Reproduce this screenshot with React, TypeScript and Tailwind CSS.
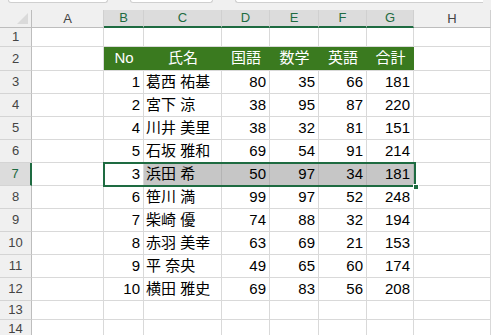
import React from 'react';

const cols = ['A', 'B', 'C', 'D', 'E', 'F', 'G', 'H'];
const widths = ['w-[72px]', 'w-[40px]', 'w-[78px]', 'w-[48px]', 'w-[49px]', 'w-[48px]', 'w-[47px]', 'flex-1'];

const rows: [number, string, number, number, number, number][] = [
  [1, '葛西 祐基', 80, 35, 66, 181],
  [2, '宮下 涼', 38, 95, 87, 220],
  [4, '川井 美里', 38, 32, 81, 151],
  [5, '石坂 雅和', 69, 54, 91, 214],
  [3, '浜田 希', 50, 97, 34, 181],
  [6, '笹川 満', 99, 97, 52, 248],
  [7, '柴崎 優', 74, 88, 32, 194],
  [8, '赤羽 美幸', 63, 69, 21, 153],
  [9, '平 奈央', 49, 65, 60, 174],
  [10, '横田 雅史', 69, 83, 56, 208],
];

const font = "font-['Liberation_Sans','Noto_Sans_CJK_JP',sans-serif]";

function RowHead({ n, h, active }: { n: number; h: string; active?: boolean }) {
  return (
    <div
      className={`w-[32px] ${h} shrink-0 flex items-center justify-center text-[13px] border-b border-[#d4d4d4] ${
        active ? 'bg-[#dcdcdc] text-[#1e6b41] border-r-2 border-r-[#1e6b41]' : 'bg-[#f0f0f0] text-[#444] border-r border-r-[#bdbdbd]'
      }`}
    >
      {n}
    </div>
  );
}

function Cell({ w, children, className = '' }: { w: string; children?: React.ReactNode; className?: string }) {
  return (
    <div className={`${w} shrink-0 h-full flex items-center border-r border-b border-[#d9d9d9] overflow-hidden whitespace-nowrap ${className}`}>
      {children}
    </div>
  );
}

export default function App() {
  return (
    <div className={`w-[491px] h-[335px] overflow-hidden bg-white text-[15px] text-black ${font}`}>
      {/* toolbar remnants */}
      <div className="h-[10px] bg-[#f0f0f0] flex gap-[22px] px-[8px]">
        <div className="w-[100px] h-[3px] bg-white border border-t-0 border-[#cfcfcf] rounded-b-[4px]" />
        <div className="w-[83px] h-[3px] bg-white border border-t-0 border-[#cfcfcf] rounded-b-[4px]" />
        <div className="flex-1 h-[3px] bg-white border border-t-0 border-r-0 border-[#cfcfcf] rounded-bl-[4px]" />
      </div>

      {/* column headers */}
      <div className="h-[18px] flex bg-[#f0f0f0] text-[13px]">
        <div className="w-[32px] shrink-0 relative border-r border-b border-[#bdbdbd]">
          <div className="absolute right-[3px] bottom-[3px] w-0 h-0 border-l-[11px] border-l-transparent border-b-[11px] border-b-[#dadada]" />
        </div>
        {cols.map((c, i) => {
          const sel = i >= 1 && i <= 6;
          return (
            <div
              key={c}
              className={`${widths[i]} shrink-0 flex items-center justify-center border-r border-[#d0d0d0] ${
                sel ? 'bg-[#dcdcdc] text-[#1e6b41] border-b-2 border-b-[#1e6b41]' : 'text-[#444] border-b border-b-[#bdbdbd]'
              }`}
            >
              {c}
            </div>
          );
        })}
      </div>

      <div className="relative">
        {/* row 1 */}
        <div className="flex h-[19px]">
          <RowHead n={1} h="h-[19px]" />
          {widths.map((w, i) => (
            <Cell key={i} w={w} />
          ))}
        </div>

        {/* row 2: table header */}
        <div className="flex h-[24px]">
          <RowHead n={2} h="h-[24px]" />
          <Cell w={widths[0]} />
          <div className="w-[310px] shrink-0 h-full flex bg-[#3a7a1f] text-white border-b border-[#d9d9d9]">
            {['No', '氏名', '国語', '数学', '英語', '合計'].map((t, i) => (
              <div key={t} className={`${widths[i + 1]} shrink-0 flex items-center justify-center`}>
                {t}
              </div>
            ))}
          </div>
          <Cell w={widths[7]} />
        </div>

        {/* data rows */}
        {rows.map((r, ri) => {
          const active = ri === 4;
          const fill = active ? 'bg-[#c6c6c6] border-r-[#b4b4b4]' : '';
          return (
            <div key={ri} className="flex h-[23px]">
              <RowHead n={ri + 3} h="h-[23px]" active={active} />
              <Cell w={widths[0]} />
              <Cell w={widths[1]} className="justify-end pr-[3px]">{r[0]}</Cell>
              <Cell w={widths[2]} className={`pl-[2px] ${fill}`}>{r[1]}</Cell>
              {[r[2], r[3], r[4], r[5]].map((v, k) => (
                <Cell key={k} w={widths[k + 3]} className={`justify-end pr-[3px] ${fill}`}>
                  {v}
                </Cell>
              ))}
              <Cell w={widths[7]} />
            </div>
          );
        })}

        {/* rows 13, 14 */}
        {[13, 14].map((n) => (
          <div key={n} className="flex h-[19px]">
            <RowHead n={n} h="h-[19px]" />
            {widths.map((w, i) => (
              <Cell key={i} w={w} />
            ))}
          </div>
        ))}

        {/* selection outline B7:G7 */}
        <div className="absolute left-[103px] top-[134px] w-[313px] h-[25px] border-2 border-[#1e6b41] pointer-events-none">
          <div className="absolute right-[-5px] bottom-[-5px] w-[6px] h-[6px] bg-[#1e6b41] border border-white" />
        </div>
      </div>
    </div>
  );
}
